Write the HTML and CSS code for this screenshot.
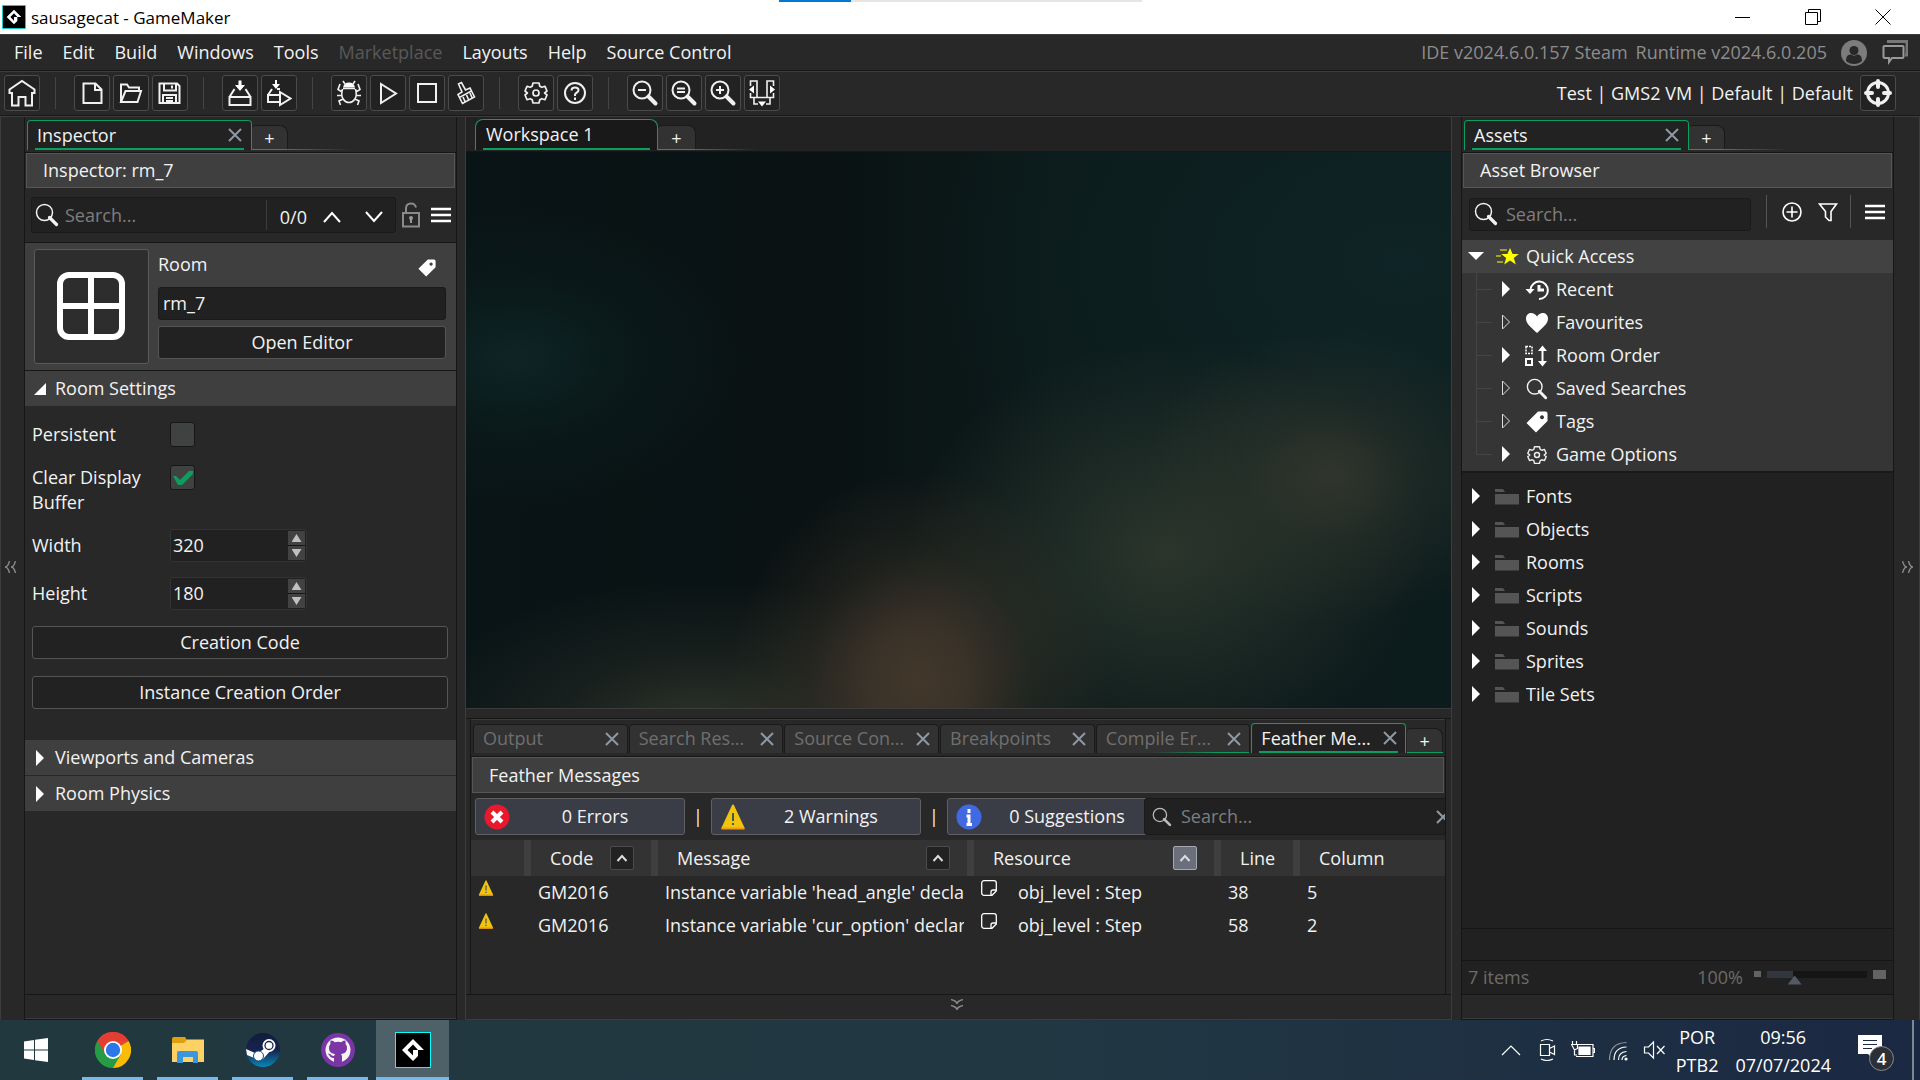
FILE: index.html
```html
<!DOCTYPE html>
<html lang="en">
<head>
    <meta charset="UTF-8">
    <meta name="viewport" content="width=device-width, initial-scale=1.0">
    <title>sausagecat - GameMaker</title>
    <link rel="stylesheet" href="styles.css">
</head>
<body>
    <!-- Shared icons -->
    <svg class="sprite" aria-hidden="true">
        <symbol id="logo" viewBox="0 0 36 36">
            <rect x="0.5" y="0.5" width="35" height="35" fill="#000" stroke="#0ff"/>
            <path fill="#fff" fill-rule="evenodd" d="M18 7 29 18h-6v6l-5 5L7 18zM18 12.500 12.500 18l5.500 5.500v-5.500h5z"/>
        </symbol>
        <symbol id="close" viewBox="0 0 14 14"><path d="M1 1 13 13M13 1 1 13" fill="none" stroke="#8f98a5" stroke-width="2"/></symbol>
        <symbol id="search" viewBox="0 0 24 24"><circle cx="9.500" cy="9.500" r="8" fill="none" stroke="currentColor" stroke-width="1.500"/><path d="m14.500 14.500 7 7" stroke="currentColor" stroke-width="3.200" stroke-linecap="round"/></symbol>
        <symbol id="menu" viewBox="0 0 20 16"><path d="M0 2h20M0 8h20M0 14h20" stroke="#fff" stroke-width="2.600"/></symbol>
        <symbol id="right" viewBox="0 0 16 16"><path d="m4 0 8 8-8 8z" fill="#fff"/></symbol>
        <symbol id="right-empty" viewBox="0 0 16 16"><path d="m4.500 1 7 7-7 7z" fill="none" stroke="#ddd"/></symbol>
        <symbol id="down" viewBox="0 0 16 16"><path d="M0 4h16l-8 8z" fill="#fff"/></symbol>
        <symbol id="folder" viewBox="0 0 26 18"><path d="M1 1h8l2 3H1zM1 6h24v10.500H1z" fill="#555"/></symbol>
        <symbol id="tag" viewBox="0 0 22 22"><path fill="#fff" fill-rule="evenodd" d="M12 .5h7.500a2 2 0 0 1 2 2V10L10 21.500.5 12zM16 4.200a2 2 0 1 0 .01 0z"/></symbol>
        <symbol id="gear" viewBox="0 0 24 24"><path fill="none" stroke="#eee" stroke-width="1.700" stroke-linejoin="round" d="M9 2h6l.8 3.200 2 1.100L21 5.300l2 4.700-2.400 2 2.400 2-2 4.700-3.200-1-2 1.100L15 22H9l-.8-3.200-2-1.100-3.200 1L1 14l2.400-2L1 10l2-4.700 3.200 1 2-1.100z"/><circle cx="12" cy="12" r="3" fill="none" stroke="#eee" stroke-width="1.700"/></symbol>
        <symbol id="warning" viewBox="0 0 24 26"><path d="M12 1.500 22.500 24h-21z" fill="#f1c40f" stroke="#f1c40f" stroke-width="2" stroke-linejoin="round"/><path d="M.5 24.500h23" stroke="#f39c12" stroke-width="2"/><path d="M12 9v8M12 19v2" stroke="#34495e" stroke-width="1.800"/></symbol>
        <symbol id="event" viewBox="0 0 16 16"><path d="M3 .7h10A2.300 2.300 0 0 1 15.300 3v8L11 15.300H3A2.300 2.300 0 0 1 .7 13V3A2.300 2.300 0 0 1 3 .7zM15 10h-3a2 2 0 0 0-2 2v3" fill="none" stroke="#fff" stroke-width="1.300"/></symbol>
        <symbol id="sort" viewBox="0 0 12 8"><path d="m1.500 7 4.500-5 4.500 5" fill="none" stroke="#ddd" stroke-width="2"/></symbol>
    </svg>

    <header class="titlebar">
        <svg class="app-icon"><use href="#logo"/></svg>
        <span>sausagecat - GameMaker</span>
        <div class="progress"></div>
        <div class="window-buttons">
            <button aria-label="Minimise"><svg viewBox="0 0 16 16"><path d="M0 8.500h15"/></svg></button>
            <button aria-label="Restore"><svg viewBox="0 0 16 16"><path d="M.5 3.500h12v12H.5zM3.500 3.500v-3h12v12h-3"/></svg></button>
            <button aria-label="Close window"><svg viewBox="0 0 16 16"><path d="m.5.5 15 15M15.500.5l-15 15"/></svg></button>
        </div>
    </header>

    <nav class="menubar">
        <button>File</button>
        <button>Edit</button>
        <button>Build</button>
        <button>Windows</button>
        <button>Tools</button>
        <button disabled>Marketplace</button>
        <button>Layouts</button>
        <button>Help</button>
        <button>Source Control</button>
        <span class="version">IDE v2024.6.0.157 Steam</span>
        <span class="version">Runtime v2024.6.0.205</span>
        <svg class="account" viewBox="0 0 26 26"><circle cx="13" cy="13" r="13" fill="#7c7c7c"/><circle cx="13" cy="10.500" r="4.500" fill="#282828"/><path d="M5 21c0-7 4-6.500 5-6.500 2 1.500 4 1.500 6 0 1 0 5-.5 5 6.500-4 4-12 4-16 0z" fill="#282828"/></svg>
        <svg class="chat" viewBox="0 0 26 26"><path d="M5 1.500h20V15h-2" fill="none" stroke="#777" stroke-width="3"/><path d="M2.500 6h18a1 1 0 0 1 1 1v10a1 1 0 0 1-1 1H10l-3 4v-4H2.500a1 1 0 0 1-1-1V7a1 1 0 0 1 1-1z" fill="none" stroke="#999" stroke-width="2"/></svg>
    </nav>

    <div class="toolbar">
        <button aria-label="Home"><svg viewBox="1 1 34 34"><path d="M5.500 14.500 18 6l12.500 8.500V18H28v12.500h-6.500V22h-7v8.500H8V18H5.500z"/></svg></button>
        <i class="sep"></i>
        <button aria-label="New"><svg viewBox="1 1 34 34"><path d="M9.500 8.500h12l6 6v13.500h-18zM21 8.500V15h6.500"/></svg></button>
        <button aria-label="Open"><svg viewBox="1 1 34 34"><path d="M8 27V9.500h6l2 3h10V16M8 27l4.500-11H28l-3.500 11z"/></svg></button>
        <button aria-label="Save"><svg viewBox="1 1 34 34"><path d="M7.500 8.500H25l2.500 2.500v17h-20zM12 8.500v7h12v-7M20 10.500v3M11 28v-8h13v8M14 23h7M14 26h7"/></svg></button>
        <i class="sep"></i>
        <button aria-label="Create Executable"><svg viewBox="1 1 34 34"><path d="M7.500 22h21v8h-21zM7.500 22l5-8M28.500 22l-5-8"/><path class="solid" d="M16.500 5.500h3V10H23l-5 6-5-6h3.500z"/></svg></button>
        <button aria-label="Create and Run"><svg viewBox="1 1 34 34"><path d="M18 27H7v-7h12M7 20l4-6M16 14h3M19 17l10.500 6.500L19 30z"/><path class="solid" d="M14 5h2v4h3l-4 5-4-5h3z"/></svg></button>
        <i class="sep"></i>
        <button aria-label="Debug"><svg class="fine" viewBox="1 1 34 34"><path d="M14 9 12 6M22 9l2-3M12 13.500h12M11.500 14q-2 7 1 10.500 2 3 5.500 3t5.500-3q3-3.500 1-10.500M11 17 7 14.500 9 9M25 17l4-2.500L27 9M10.500 20.500H6M25.500 20.500H30M12 24l-4 2 1.500 4M24 24l4 2-1.500 4"/><path class="solid" d="M12 12.500q1-5 6-5t6 5z"/></svg></button>
        <button aria-label="Run"><svg viewBox="1 1 34 34"><path d="m11 9 15 9.500L11 28z"/></svg></button>
        <button aria-label="Stop"><svg viewBox="1 1 34 34"><path d="M9 9h18v18H9z"/></svg></button>
        <button aria-label="Clean"><svg class="fine" viewBox="1 1 34 34"><path d="m10.500 9 3-1.500 4 7.500 4.500-2 1.500 3-12 6.500-1.500-3 4-2.500zM11.500 22.500l3 6 12-6.500-3-6M15 22l2 4.500M18.500 20l2 4.500M22 18l2 4.500"/></svg></button>
        <i class="sep"></i>
        <button aria-label="Game Options"><svg viewBox="-5 -5 34 34"><use href="#gear" width="24" height="24"/></svg></button>
        <button aria-label="Help"><svg viewBox="1 1 34 34"><circle cx="18" cy="18" r="10"/><path d="M14.500 15.500q0-3 3.500-3t3.500 2.500q0 1.500-1.800 2.700T18 20v1M18 22.500V25"/></svg></button>
        <i class="sep"></i>
        <button aria-label="Zoom Out"><svg viewBox="1 1 34 34"><circle cx="15" cy="15" r="8.500"/><path d="M11 15h8"/><path class="thick" d="m21.500 21.500 7 7"/></svg></button>
        <button aria-label="Zoom Reset"><svg viewBox="1 1 34 34"><circle cx="15" cy="15" r="8.500"/><path d="M11 13.500h8M11 17h8"/><path class="thick" d="m21.500 21.500 7 7"/></svg></button>
        <button aria-label="Zoom In"><svg viewBox="1 1 34 34"><circle cx="15" cy="15" r="8.500"/><path d="M11 15h8M15 11v8"/><path class="thick" d="m21.500 21.500 7 7"/></svg></button>
        <button aria-label="Fit to Window"><svg class="fine" viewBox="1 1 34 34"><path d="M6.500 11V6H13v16.500M29.500 11V6H23v16.500M6.500 18v4.500h23V18M10 22.500V29h4M26 22.500V29h-4"/><path class="solid" d="M10 10.500v8L5 14.500zM26 10.500v8l5-4zM14 26.500h8l-4 5z"/></svg></button>
        <span class="target">Test | GMS2 VM | Default | Default</span>
        <button aria-label="Target Manager"><svg viewBox="1 1 34 34"><circle cx="18" cy="18" r="10.500" stroke-width="3"/><path class="thick" d="M18 6v6M18 24v6M6 18h6M24 18h6"/></svg></button>
    </div>

    <main class="workspace">
        <button class="strip left" aria-label="Collapse left dock"><svg viewBox="0 0 12 12"><path d="M5.500 0Q4 6 1 6q3 0 4.500 6M11.500 0Q10 6 7 6q3 0 4.500 6"/></svg></button>

        <section class="dock">
            <div class="tabs">
                <div class="tab active">Inspector<button aria-label="Close"><svg><use href="#close"/></svg></button></div>
                <button class="tab-add">+</button>
            </div>
            <h2 class="panel-title">Inspector: rm_7</h2>
            <div class="inspector-search">
                <div class="search-box">
                    <svg class="search-icon"><use href="#search"/></svg>
                    <input type="text" placeholder="Search..." aria-label="Search inspector">
                    <span class="count">0/0</span>
                    <button aria-label="Previous"><svg viewBox="0 0 20 14"><path d="m2 12 8-9 8 9"/></svg></button>
                    <button aria-label="Next"><svg viewBox="0 0 20 14"><path d="m2 2 8 9 8-9"/></svg></button>
                </div>
                <svg class="lock" viewBox="0 0 18 26"><path d="M1 11h16v13.500H1zM4 11V6.500Q4 1.500 9 1.500q4 0 5 4" fill="none" stroke="#8a8a8a" stroke-width="2"/><circle cx="9" cy="16" r="2" fill="#999"/><path d="M9 16v5" stroke="#999" stroke-width="2"/></svg>
                <button class="icon-button" aria-label="Inspector menu"><svg class="menu-icon"><use href="#menu"/></svg></button>
            </div>

            <div class="resource">
                <div class="thumb"><svg viewBox="0 0 68 68"><rect x="3" y="3" width="62" height="62" rx="9"/><path d="M34 3v62M3 34h62"/></svg></div>
                <div class="resource-info">
                    <div class="resource-type">
                        <label for="roomName">Room</label>
                        <svg class="tag-icon"><use href="#tag"/></svg>
                    </div>
                    <input type="text" id="roomName" value="rm_7">
                    <button class="push">Open Editor</button>
                </div>
            </div>

            <h3 class="section open"><svg viewBox="0 0 12 12"><path d="M12 0v12H0z" fill="#fff"/></svg>Room Settings</h3>
            <div class="settings">
                <div class="field">
                    <label for="persistent">Persistent</label>
                    <input type="checkbox" id="persistent">
                </div>
                <div class="field">
                    <label for="clearBuffer">Clear Display Buffer</label>
                    <input type="checkbox" id="clearBuffer" checked>
                </div>
                <div class="field">
                    <label for="width">Width</label>
                    <div class="number">
                        <input type="number" id="width" value="320">
                        <div class="spin"><button aria-label="Increase width"></button><button aria-label="Decrease width"></button></div>
                    </div>
                </div>
                <div class="field">
                    <label for="height">Height</label>
                    <div class="number">
                        <input type="number" id="height" value="180">
                        <div class="spin"><button aria-label="Increase height"></button><button aria-label="Decrease height"></button></div>
                    </div>
                </div>
                <div class="actions">
                    <button class="push">Creation Code</button>
                    <button class="push">Instance Creation Order</button>
                </div>
            </div>
            <h3 class="section"><svg><use href="#right"/></svg>Viewports and Cameras</h3>
            <h3 class="section"><svg><use href="#right"/></svg>Room Physics</h3>
            <div class="dock-foot"></div>
        </section>

        <div class="gutter left"></div>

        <section class="center">
            <div class="tabs main-tabs">
                <div class="tab active round">Workspace 1</div>
                <button class="tab-add">+</button>
            </div>
            <div class="canvas"></div>
            <div class="split"></div>

            <div class="output">
                <div class="tabs">
                    <div class="tab">Output<button aria-label="Close"><svg><use href="#close"/></svg></button></div>
                    <div class="tab">Search Res...<button aria-label="Close"><svg><use href="#close"/></svg></button></div>
                    <div class="tab">Source Con...<button aria-label="Close"><svg><use href="#close"/></svg></button></div>
                    <div class="tab">Breakpoints<button aria-label="Close"><svg><use href="#close"/></svg></button></div>
                    <div class="tab before-active">Compile Er...<button aria-label="Close"><svg><use href="#close"/></svg></button></div>
                    <div class="tab active">Feather Me...<button aria-label="Close"><svg><use href="#close"/></svg></button></div>
                    <button class="tab-add">+</button>
                </div>
                <h2 class="panel-title">Feather Messages</h2>
                <div class="filters">
                    <button class="filter">
                        <svg viewBox="0 0 26 26"><circle cx="13" cy="13" r="12.500" fill="#e8192c"/><path d="m8 8 10 10M18 8 8 18" stroke="#fff" stroke-width="4"/></svg>
                        <span>0 Errors</span>
                    </button>
                    <span class="bar">|</span>
                    <button class="filter">
                        <svg><use href="#warning"/></svg>
                        <span>2 Warnings</span>
                    </button>
                    <span class="bar">|</span>
                    <button class="filter">
                        <svg viewBox="0 0 26 26"><circle cx="13" cy="13" r="12.500" fill="#4169e1"/><path d="M13 5v4M10.500 12H13v8M10.500 20.500h5.500" fill="none" stroke="#fff" stroke-width="3"/></svg>
                        <span>0 Suggestions</span>
                    </button>
                    <div class="filter-search">
                        <svg class="search-icon"><use href="#search"/></svg>
                        <input type="text" placeholder="Search..." aria-label="Search messages">
                        <button aria-label="Clear"><svg><use href="#close"/></svg></button>
                    </div>
                </div>
                <table class="messages">
                    <colgroup><col class="c-icon"><col class="c-code"><col class="c-message"><col class="c-resource"><col class="c-line"><col></colgroup>
                    <thead>
                        <tr>
                            <th></th>
                            <th><div>Code<button aria-label="Sort by code"><svg><use href="#sort"/></svg></button></div></th>
                            <th><div>Message<button aria-label="Sort by message"><svg><use href="#sort"/></svg></button></div></th>
                            <th><div>Resource<button class="on" aria-label="Sort by resource"><svg><use href="#sort"/></svg></button></div></th>
                            <th><div>Line</div></th>
                            <th><div>Column</div></th>
                        </tr>
                    </thead>
                    <tbody>
                        <tr>
                            <td><svg class="row-icon"><use href="#warning"/></svg></td>
                            <td>GM2016</td>
                            <td><div class="clip">Instance variable 'head_angle' declar</div></td>
                            <td><svg class="row-icon"><use href="#event"/></svg>obj_level : Step</td>
                            <td>38</td>
                            <td>5</td>
                        </tr>
                        <tr>
                            <td><svg class="row-icon"><use href="#warning"/></svg></td>
                            <td>GM2016</td>
                            <td><div class="clip">Instance variable 'cur_option' declar</div></td>
                            <td><svg class="row-icon"><use href="#event"/></svg>obj_level : Step</td>
                            <td>58</td>
                            <td>2</td>
                        </tr>
                    </tbody>
                </table>
            </div>
            <button class="strip bottom" aria-label="Collapse output"><svg viewBox="0 0 12 12"><path d="M0 .5Q6 2 6 5 6 2 12 .5M0 6.500Q6 8 6 11q0-3 6-4.500"/></svg></button>
        </section>

        <div class="gutter right"></div>

        <section class="dock">
            <div class="tabs">
                <div class="tab active">Assets<button aria-label="Close"><svg><use href="#close"/></svg></button></div>
                <button class="tab-add">+</button>
            </div>
            <h2 class="panel-title">Asset Browser</h2>
            <div class="asset-search">
                <div class="search-box">
                    <svg class="search-icon"><use href="#search"/></svg>
                    <input type="text" placeholder="Search..." aria-label="Search assets">
                </div>
                <i class="sep"></i>
                <button class="icon-button" aria-label="Add asset"><svg viewBox="0 0 22 22"><circle cx="11" cy="11" r="9"/><path d="M11 5.500v11M5.500 11h11"/></svg></button>
                <button class="icon-button" aria-label="Filter"><svg viewBox="0 0 22 22"><path d="M2.500 3h17l-5.500 7.500v9h-2L8.500 16v-5.500z"/></svg></button>
                <i class="sep"></i>
                <button class="icon-button" aria-label="Asset menu"><svg class="menu-icon"><use href="#menu"/></svg></button>
            </div>

            <ul class="tree quick">
                <li class="root"><svg class="arrow"><use href="#down"/></svg><svg class="icon" viewBox="0 0 26 20"><path d="m16 1 2.600 6h6.200l-5 4 2 6.500-5.800-4-5.800 4 2-6.500-5-4h6.200z" fill="#ff0"/><path d="M6 3h7M2 9h5M3 15h6" stroke="#ff0"/></svg>Quick Access</li>
                <li><svg class="arrow"><use href="#right"/></svg><svg class="icon" viewBox="0 0 26 22"><path d="M6.500 10.500a8.700 8.700 0 1 1 8.500 9.500" fill="none" stroke="#fff" stroke-width="2"/><path d="M1.500 10h9L6 15z" fill="#fff"/><path d="M15 6v5h5" fill="none" stroke="#fff" stroke-width="3"/></svg>Recent</li>
                <li><svg class="arrow"><use href="#right-empty"/></svg><svg class="icon" viewBox="0 0 26 22"><path d="M13 21C7 15 2 12 2 6.500 2 0 10-1 13 4.500 16-1 24 0 24 6.500 24 12 19 15 13 21z" fill="#fff"/></svg>Favourites</li>
                <li><svg class="arrow"><use href="#right"/></svg><svg class="icon" viewBox="0 0 26 22"><path d="M2 1.500h6v7H2z" fill="none" stroke="#fff" stroke-width="1.500" stroke-dasharray="2 1"/><path d="M2 14h6v6H2zM18.500 3v16" fill="none" stroke="#fff" stroke-width="2"/><path d="m14 6 4.500-5.500L23 6zM14 16h9l-4.500 5.500z" fill="#fff"/></svg>Room Order</li>
                <li><svg class="arrow"><use href="#right-empty"/></svg><svg class="icon"><use href="#search"/></svg>Saved Searches</li>
                <li><svg class="arrow"><use href="#right-empty"/></svg><svg class="icon"><use href="#tag"/></svg>Tags</li>
                <li><svg class="arrow"><use href="#right"/></svg><svg class="icon small"><use href="#gear"/></svg>Game Options</li>
            </ul>
            <ul class="tree assets">
                <li><svg class="arrow"><use href="#right"/></svg><svg class="icon"><use href="#folder"/></svg>Fonts</li>
                <li><svg class="arrow"><use href="#right"/></svg><svg class="icon"><use href="#folder"/></svg>Objects</li>
                <li><svg class="arrow"><use href="#right"/></svg><svg class="icon"><use href="#folder"/></svg>Rooms</li>
                <li><svg class="arrow"><use href="#right"/></svg><svg class="icon"><use href="#folder"/></svg>Scripts</li>
                <li><svg class="arrow"><use href="#right"/></svg><svg class="icon"><use href="#folder"/></svg>Sounds</li>
                <li><svg class="arrow"><use href="#right"/></svg><svg class="icon"><use href="#folder"/></svg>Sprites</li>
                <li><svg class="arrow"><use href="#right"/></svg><svg class="icon"><use href="#folder"/></svg>Tile Sets</li>
            </ul>
            <div class="breadcrumb"></div>
            <div class="status">
                <span>7 items</span>
                <label for="zoom">100%</label>
                <i class="zoom-small"></i>
                <input type="range" id="zoom" min="0" max="100" value="24">
                <i class="zoom-large"></i>
            </div>
            <div class="dock-foot"></div>
        </section>

        <button class="strip right" aria-label="Collapse right dock"><svg viewBox="0 0 12 12"><path d="M.5 0Q2 6 5 6 2 6 .5 12M6.500 0Q8 6 11 6 8 6 6.500 12"/></svg></button>
    </main>

    <footer class="taskbar">
        <button class="start" aria-label="Start"><svg viewBox="0 0 24 24"><path fill="#fff" d="M0 3.400 10 2v9.500H0zM11 1.800 24 0v11.500H11zM0 12.500h10V22L0 20.600zM11 12.500h13V24l-13-1.800z"/></svg></button>
        <button class="task" aria-label="Chrome"><svg viewBox="0 0 36 36"><path d="M18 18 2.400 9A18 18 0 0 1 33.600 9z" fill="#ea4335"/><path d="M18 18 33.600 9A18 18 0 0 1 18 36z" fill="#fbbc05"/><path d="M18 18 25.800 22.500 18 36A18 18 0 0 1 2.400 9z" fill="#259b45"/><path d="M2.400 9 10.200 22.500 18 9h15.600A18 18 0 0 0 2.400 9z" fill="#e33e31"/><path d="M2.400 9 10.200 22.500 18 27l-3 8.700A18 18 0 0 1 2.400 9z" fill="#259b45"/><circle cx="18" cy="18" r="9" fill="#fff"/><circle cx="18" cy="18" r="7.200" fill="#2d78e9"/></svg></button>
        <button class="task" aria-label="File Explorer"><svg viewBox="0 0 36 36"><path d="M2 7q0-2 2-2h11l2 3-2 3H2z" fill="#e0a00d"/><path d="M2 11h12l3-3.500h17V30H2z" fill="#fdd163"/><path d="M7 31V21q0-2 2-2h17q2 0 2 2v10h-5v-6H13v6z" fill="#3a96dd"/></svg></button>
        <button class="task" aria-label="Steam"><svg viewBox="0 0 36 36"><defs><linearGradient id="steam" x2="0" y2="1"><stop offset="0" stop-color="#111d3a"/><stop offset=".5" stop-color="#17234f"/><stop offset="1" stop-color="#0887b8"/></linearGradient></defs><circle cx="18" cy="18" r="17" fill="url(#steam)"/><path d="m1 17 11 5 8-6 7 1-9 10-4 1L2 23z" fill="#fff"/><circle cx="24" cy="13.500" r="6.500" fill="#fff"/><circle cx="24" cy="13.500" r="4" fill="#fff" stroke="#17234f" stroke-width="1.300"/><circle cx="13.500" cy="24" r="5" fill="#fff" stroke="#124d80"/></svg></button>
        <button class="task" aria-label="GitHub Desktop"><svg viewBox="0 0 36 36"><circle cx="18" cy="18" r="17" fill="#7b35a5"/><circle cx="18" cy="18" r="12.500" fill="#f4f4f4"/><path fill="#7b35a5" d="M14 31v-5c-5 0-4-4-6.500-4 3-1.500 4 2.500 6.500 2l1-2c-4.500-.5-6-3-6-6 0-2 .5-3 1.500-4-.5-1.500 0-3 .3-3.500 2 0 3 1 4 1.700a13 13 0 0 1 6.400 0c1-.7 2-1.700 4-1.700.3.500.8 2 .3 3.500 1 1 1.500 2 1.500 4 0 3-1.500 5.500-6 6l1 2v7z"/></svg></button>
        <button class="task current" aria-label="GameMaker"><svg><use href="#logo"/></svg></button>

        <div class="tray">
            <svg viewBox="0 0 24 24"><path d="m3 17 9-9 9 9"/></svg>
            <svg viewBox="0 0 24 24"><path d="M5.500 6.500h9v11h-9zM14.500 10.500l5-2.500v8.500l-5-2.500M6 3q6-3 12 0M6 21q6 3 12 0"/></svg>
            <svg viewBox="0 0 24 24"><path d="M5 18.500h17v-12H7M22.500 10.500h1v4h-1"/><path d="M8 9h11v7.500H8z" fill="#fff"/><path d="M1.500 3v3M5.500 3v3M.5 6.500h6v4L3.500 12zM3.500 11v6H6"/></svg>
            <svg viewBox="0 0 24 24"><path d="M2.500 22Q2.500 5 19.500 4.500" opacity=".5"/><path d="M7 22Q7 9.500 19.500 9M11.500 22q0-8 8-8.500M15 22q0-4 4.500-4.500"/><circle cx="19" cy="21" r="1" fill="#fff"/></svg>
            <svg viewBox="0 0 24 24"><path d="M1.500 9h4l5-5v16l-5-5h-4zM14 8l7.500 8M21.500 8 14 16"/></svg>
        </div>
        <div class="lang"><span>POR</span><span>PTB2</span></div>
        <div class="clock"><span>09:56</span><span>07/07/2024</span></div>
        <button class="notifications" aria-label="Notifications">
            <svg viewBox="0 0 24 24"><path d="M0 0h24v19h-9v5l-5-5H0z" fill="#fff"/><path d="M5 5.500h14M5 9.500h14M5 13.500h9" stroke="#1d2c44" stroke-width="1.200"/></svg>
            <span class="badge">4</span>
        </button>
        <i class="show-desktop"></i>
    </footer>
</body>
</html>
```

FILE: styles.css
```css
* {
    box-sizing: border-box;
}

body {
    margin: 0;
    min-height: 100vh;
    display: flex;
    flex-direction: column;
    overflow: hidden;
    background-color: #282828;
    color: #f2f2f2;
    font-family: "Open Sans", "Noto Sans", sans-serif;
    font-size: 18px;
    line-height: 25px;
}

button, input {
    font: inherit;
    color: inherit;
    margin: 0;
    padding: 0;
    border: none;
    background: none;
}

input {
    outline: none;
    min-width: 0;
}

input::placeholder {
    color: #7e7e7e;
    opacity: 1;
}

svg {
    display: block;
    flex: none;
}

h2, h3 {
    margin: 0;
    font-size: 18px;
    font-weight: normal;
}

.sprite {
    position: absolute;
    width: 0;
    height: 0;
}

/* Title bar */
.titlebar {
    position: relative;
    display: flex;
    align-items: center;
    height: 34px;
    padding: 0 2px;
    gap: 5px;
    background-color: #fff;
    color: #000;
    font-size: 17px;
}

.app-icon {
    width: 24px;
    height: 24px;
}

.progress {
    position: absolute;
    top: 0;
    left: 779px;
    width: 363px;
    height: 2px;
    background: linear-gradient(to right, #0078d7 72px, #e5e5e5 72px);
}

.window-buttons {
    display: flex;
    margin-left: auto;
}

.window-buttons button {
    width: 70px;
    height: 34px;
    display: flex;
    align-items: center;
    justify-content: center;
}

.window-buttons svg {
    width: 16px;
    height: 16px;
    fill: none;
    stroke: #000;
}

/* Menu and toolbar */
.menubar {
    display: flex;
    align-items: center;
    height: 37px;
    padding-left: 4px;
    border-top: 1px solid #3c3c3c;
    border-bottom: 1px solid #191919;
}

.menubar button {
    padding: 0 10px;
}

.menubar button:disabled {
    color: #595959;
}

.version {
    margin-left: 8px;
    color: #8d8d8d;
}

.menubar button + .version {
    margin-left: auto;
}

.account {
    width: 26px;
    height: 26px;
    margin-left: 14px;
}

.chat {
    width: 26px;
    height: 26px;
    margin: 0 12px 0 15px;
}

.toolbar {
    display: flex;
    align-items: center;
    gap: 3px;
    height: 45px;
    padding: 0 24px 1px 4px;
    border-top: 1px solid #3c3c3c;
    border-bottom: 1px solid #191919;
}

.toolbar button {
    width: 36px;
    height: 36px;
    border: 1px solid #4b4b4b;
    border-radius: 3px;
    background-color: #222;
}

.toolbar svg {
    width: 34px;
    height: 34px;
    fill: none;
    stroke: #f0f0f0;
    stroke-width: 2;
}

.toolbar .fine {
    stroke-width: 1.6;
}

.toolbar .solid {
    fill: #fff;
    stroke: none;
}

.toolbar .thick {
    stroke-width: 4;
    stroke-linecap: round;
}

.toolbar .sep {
    width: 1px;
    height: 32px;
    margin: 0 15px 0 12px;
    background-color: #444;
}

.target {
    margin-left: auto;
    margin-right: 4px;
}

/* Docks */
.workspace {
    flex: 1;
    display: flex;
    border-top: 1px solid #3c3c3c;
}

.strip {
    display: flex;
    align-items: center;
    justify-content: center;
    padding-bottom: 4px;
}

.strip svg {
    width: 12px;
    height: 12px;
    fill: none;
    stroke: #8a8a8a;
    stroke-width: 1.4;
}

.strip.left {
    width: 24px;
    padding-right: 5px;
    border-left: 1px solid #3c3c3c;
}

.strip.right {
    width: 26px;
    padding-left: 2px;
    border-right: 1px solid #3c3c3c;
}

.strip.bottom {
    height: 26px;
    padding-right: 4px;
    border-top: 1px solid #161616;
    border-bottom: 1px solid #3c3c3c;
}

.dock {
    width: 433px;
    display: flex;
    flex-direction: column;
    border: solid #161616;
    border-width: 0 1px 1px;
}

.dock-foot {
    height: 25px;
    margin-top: auto;
    border-top: 1px solid #161616;
    border-bottom: 1px solid #3c3c3c;
}

.gutter.left {
    width: 9px;
    border-right: 1px solid #3c3c3c;
}

.gutter.right {
    width: 10px;
    border-left: 1px solid #3c3c3c;
}

.tabs {
    display: flex;
    align-items: flex-end;
    height: 36px;
    padding: 0 2px 2px;
    border-bottom: 1px solid #161616;
}

.tab {
    display: flex;
    align-items: center;
    justify-content: space-between;
    position: relative;
    height: 29px;
    padding: 0 8px 1px 9px;
    border: solid #1a1a1a;
    border-width: 1px 1px 0;
    border-radius: 4px 4px 0 0;
    background-color: #323232;
    color: #6f6f6f;
}

.tab svg {
    width: 14px;
    height: 14px;
}

.tab.active {
    height: 30px;
    border-color: #0d9d5c;
    background-color: #222;
    color: #f2f2f2;
}

.tab.active::after {
    content: "";
    position: absolute;
    left: 7px;
    right: 7px;
    bottom: 0;
    height: 2px;
    background-color: #0d9d5c;
}

/* Fading line that continues the active tab */
.tab.active + .tab-add::after,
.tab.before-active::after {
    content: "";
    position: absolute;
    left: 0;
    bottom: 0;
    width: 100px;
    height: 1px;
    background: linear-gradient(to right, #0d9d5c 30%, transparent);
}

.tab.before-active::after {
    left: auto;
    right: 0;
    background: linear-gradient(to left, #0d9d5c 30%, transparent);
}

.dock .tab {
    width: 225px;
    padding-right: 9px;
}

.tab-add {
    position: relative;
    width: 36px;
    height: 25px;
    border: solid #1a1a1a;
    border-width: 1px 1px 0 0;
    border-radius: 4px 8px 0 0;
    background-color: #323232;
    line-height: 22px;
}

.panel-title {
    height: 36px;
    margin: 0 1px;
    padding: 0 16px;
    border: 1px solid #565656;
    background-color: #3f3f3f;
    line-height: 34px;
}

.dock .panel-title {
    height: 35px;
    line-height: 32px;
}

.search-box {
    display: flex;
    align-items: center;
    min-width: 0;
    border: 1px solid #1a1a1a;
    border-radius: 3px;
    background-color: #212121;
}

.search-icon {
    width: 24px;
    height: 24px;
}

.icon-button svg {
    width: 22px;
    height: 22px;
    fill: none;
    stroke: #fff;
    stroke-width: 1.6;
}

.icon-button .menu-icon {
    width: 20px;
    height: 16px;
}

/* Inspector */
.inspector-search {
    display: flex;
    align-items: center;
    height: 54px;
    padding: 0 5px 0 6px;
}

.inspector-search .search-box {
    flex: 1;
    height: 36px;
    padding-left: 3px;
}

.inspector-search input {
    flex: 1;
    height: 30px;
    padding-left: 6px;
    border-right: 1px solid #3c3c3c;
}

.count {
    padding: 4px 4px 0 13px;
}

.search-box button {
    width: 42px;
    flex: none;
    padding: 4px 11px 0;
}

.search-box button svg {
    width: 20px;
    height: 14px;
    fill: none;
    stroke: #fff;
    stroke-width: 2;
}

.lock {
    width: 18px;
    height: 26px;
    margin: 0 11px 0 6px;
}

.resource {
    display: flex;
    gap: 9px;
    height: 128px;
    padding: 6px 10px 0 9px;
    border-top: 1px solid #161616;
    background-color: #3f3f3f;
}

.thumb {
    width: 115px;
    height: 115px;
    display: flex;
    align-items: center;
    justify-content: center;
    padding: 0 2px 2px 0;
    border: 1px solid #5a5a5a;
    border-radius: 3px;
    background-color: #2d2d2d;
}

.thumb svg {
    width: 68px;
    height: 68px;
    fill: none;
    stroke: #fff;
    stroke-width: 6;
}

.resource-info {
    flex: 1;
    display: flex;
    flex-direction: column;
}

.resource-type {
    display: flex;
    align-items: center;
    justify-content: space-between;
    height: 38px;
    padding: 0 10px 7px 0;
}

.tag-icon {
    width: 18px;
    height: 18px;
    margin-top: 6px;
}

.resource-info input {
    height: 33px;
    padding: 0 4px 2px;
    border: 1px solid #1a1a1a;
    border-radius: 3px;
    background-color: #212121;
}

.push {
    height: 33px;
    border: 1px solid #555;
    border-radius: 3px;
    background-color: #222;
}

.resource-info .push {
    margin-top: 6px;
}

.section {
    display: flex;
    align-items: center;
    gap: 7px;
    height: 36px;
    padding-left: 7px;
    border-top: 1px solid #282828;
    background-color: #3f3f3f;
}

.section svg {
    width: 16px;
    height: 16px;
}

.section.open {
    padding-left: 9px;
    gap: 9px;
    border-top-color: #161616;
}

.section.open svg {
    width: 12px;
    height: 12px;
}

.settings {
    padding: 16px 8px 30px 7px;
}

.field {
    display: flex;
    align-items: flex-start;
    margin-bottom: 18px;
}

.field label {
    width: 120px;
    margin-right: 18px;
}

.field input[type="checkbox"] {
    appearance: none;
    width: 25px;
    height: 25px;
    border: 1px solid #161616;
    border-radius: 3px;
    background-color: #404241;
}

.field input[type="checkbox"]:checked::after {
    content: "";
    display: block;
    width: 20px;
    height: 14px;
    margin: 5px 2px;
    background-color: #0d9d5c;
    clip-path: polygon(0 35%, 15% 35%, 35% 65%, 80% 0, 100% 0, 100% 22%, 45% 100%, 25% 100%);
}

.number {
    display: flex;
    width: 137px;
    height: 33px;
    margin: -4px 0;
    padding: 1px;
    border: 1px solid #333;
    border-radius: 2px;
    background-color: #212121;
}

.number input {
    flex: 1;
    padding-left: 1px;
    appearance: textfield;
}

.number input::-webkit-inner-spin-button {
    display: none;
}

.field:has(.number) {
    margin-bottom: 23px;
}

.spin {
    display: flex;
    flex-direction: column;
    gap: 1px;
    width: 17px;
    background-color: #161616;
}

.spin button {
    flex: 1;
    background-color: #424242;
}

.spin button::before {
    content: "";
    display: block;
    width: 10px;
    height: 8px;
    margin: 0 auto;
    background-color: #c0c0c0;
    clip-path: polygon(50% 0, 100% 100%, 0 100%);
}

.spin button + button::before {
    clip-path: polygon(0 0, 100% 0, 50% 100%);
}

.actions {
    display: flex;
    flex-direction: column;
    gap: 17px;
    margin-top: -3px;
}

/* Centre column */
.center {
    flex: 1;
    min-width: 0;
    display: flex;
    flex-direction: column;
}

.main-tabs {
    height: 35px;
    padding: 0 9px 1px;
    background-color: #222;
}

.tab.round {
    width: 183px;
    height: 31px;
    padding-left: 10px;
    border-radius: 8px 8px 0 0;
    background-color: #191919;
}

.round + .tab-add {
    width: 38px;
}

.canvas {
    flex: 1;
    background:
        radial-gradient(ellipse 190px 210px at 46% 95%, #42372b 0%, rgba(66, 55, 43, 0.85) 25%, rgba(62, 52, 41, 0.35) 60%, transparent 100%),
        radial-gradient(ellipse 190px 150px at 88% 58%, rgba(56, 58, 47, 0.8), rgba(50, 55, 45, 0.4) 45%, transparent),
        radial-gradient(ellipse 260px 210px at 71% 72%, rgba(46, 56, 46, 0.9), rgba(42, 53, 44, 0.5) 50%, transparent),
        radial-gradient(ellipse 300px 150px at 24% 104%, rgba(50, 54, 44, 0.95), rgba(44, 50, 42, 0.4) 50%, transparent),
        radial-gradient(ellipse 240px 150px at 5% 37%, rgba(15, 38, 38, 0.9), rgba(12, 32, 32, 0.4) 50%, transparent),
        radial-gradient(ellipse 480px 330px at 95% 20%, rgba(15, 38, 40, 0.8), transparent),
        linear-gradient(to right, #091416 0%, #0a1213 35%, #0c1a1a 60%, #0c1b1c 100%);
}

.split {
    height: 11px;
    border-top: 1px solid #3c3c3c;
    border-bottom: 1px solid #161616;
}

.output {
    display: flex;
    flex-direction: column;
    height: 275px;
    margin: 0 5px 0 4px;
    border: solid #161616;
    border-width: 0 1px;
    overflow: hidden;
}

.output .tabs {
    flex: none;
    gap: 1px;
    border-top: 1px solid #3c3c3c;
    padding: 0 2px 3px;
    height: 38px;
}

.output .tab {
    flex: 1;
}

.output .panel-title {
    flex: none;
}

.output .tab.active + .tab-add::after {
    width: 36px;
    background: #0d9d5c;
}

.filters {
    display: flex;
    align-items: center;
    flex: none;
    height: 47px;
    padding-left: 4px;
}

.filter {
    display: flex;
    align-items: center;
    width: 210px;
    height: 37px;
    flex: none;
    padding-left: 8px;
    border: 1px solid #5e5f62;
    border-radius: 3px;
    background-color: #3b3d46;
}

.filter svg {
    width: 26px;
    height: 26px;
}

.filter span {
    flex: 1;
    padding-right: 4px;
    text-align: center;
}

.bar {
    flex: none;
    width: 26px;
    text-align: center;
}

/* The search field covers the end of the last filter */
.filter-search {
    display: flex;
    align-items: center;
    flex: none;
    position: relative;
    width: 307px;
    height: 37px;
    margin-left: -13px;
    padding-left: 6px;
    border: 1px solid #1a1a1a;
    border-radius: 3px;
    background-color: #212121;
}

.filter-search .search-icon {
    width: 20px;
    height: 20px;
    margin-left: 1px;
    color: #bbb;
}

.filter-search input {
    flex: 1;
    padding-left: 9px;
}

.filter-search button svg {
    width: 14px;
    height: 14px;
}

.messages {
    width: 100%;
    table-layout: fixed;
    border-collapse: collapse;
}

.c-icon { width: 60px; }
.c-code { width: 127px; }
.c-message { width: 316px; }
.c-resource { width: 247px; }
.c-line { width: 79px; }

.messages th {
    height: 36px;
    padding: 0 17px 0 19px;
    background: linear-gradient(#3f3f3f, #3f3f3f) right / 7px 100% no-repeat #333;
    font-weight: normal;
    text-align: left;
}

.messages th:last-child {
    background: #333;
}

.messages th div {
    display: flex;
    align-items: center;
    justify-content: space-between;
    padding-right: 7px;
}

.messages th button {
    width: 24px;
    height: 24px;
    display: flex;
    align-items: center;
    justify-content: center;
    border: 1px solid #4b4b4b;
    border-radius: 2px;
    background-color: #222;
}

.messages th button.on {
    border-color: #a4a8b0;
    background-color: #6a6f7b;
}

.messages th svg {
    width: 12px;
    height: 8px;
}

.messages td {
    height: 33px;
    padding: 0 7px;
    line-height: 33px;
    vertical-align: top;
    white-space: nowrap;
}

.clip {
    width: 299px;
    overflow: hidden;
}

.row-icon {
    float: left;
    width: 16px;
    height: 16px;
    margin: 4px 21px 0 0;
}

/* Asset browser */
.asset-search {
    display: flex;
    align-items: center;
    height: 52px;
    padding: 0 8px 0 7px;
}

.asset-search .search-box {
    flex: 1;
    height: 33px;
    margin-right: 15px;
    padding-left: 4px;
}

.asset-search input {
    flex: 1;
    padding-left: 8px;
}

.asset-search .sep {
    width: 1px;
    height: 33px;
    margin-bottom: 5px;
    background-color: #555;
}

.asset-search .icon-button {
    margin-bottom: 4px;
}

.asset-search .sep + .icon-button {
    margin-left: 14px;
}

.icon-button + .icon-button {
    margin-right: 11px;
    margin-left: 14px;
}

.tree {
    margin: 0;
    padding: 0;
    list-style: none;
}

.tree li {
    display: flex;
    align-items: center;
    position: relative;
    height: 33px;
    padding-left: 6px;
}

.arrow {
    width: 16px;
    height: 16px;
    margin: 0 10px 2px 0;
}

.icon {
    width: 26px;
    height: 22px;
    margin-right: 6px;
}

.icon.small {
    height: 20px;
}

.quick {
    background-color: #353535;
    border-bottom: 2px solid #191919;
}

.quick li:not(.root) {
    padding-left: 36px;
}

.quick .root {
    background-color: #424242;
}

.quick li:not(.root)::before {
    content: "";
    position: absolute;
    left: 14px;
    bottom: 16px;
    width: 15px;
    height: 33px;
    border: solid #454545;
    border-width: 0 0 1px 1px;
}

.quick li:nth-child(2)::before {
    height: 17px;
}

.assets {
    flex: 1;
    padding-top: 7px;
    background-color: #212121;
}

.breadcrumb {
    height: 32px;
    border-top: 1px solid #161616;
    background-color: #212121;
}

.status {
    display: flex;
    align-items: center;
    height: 34px;
    padding: 0 7px 0 6px;
    border-top: 1px solid #161616;
    background-color: #212121;
    color: #6b6b6b;
}

.status label {
    margin-left: auto;
}

.zoom-small {
    width: 7px;
    height: 6px;
    margin: 0 6px 7px 11px;
    background-color: #636363;
}

.zoom-large {
    width: 13px;
    height: 9px;
    margin: 0 0 6px 6px;
    background-color: #636363;
}

.status input {
    appearance: none;
    width: 100px;
    height: 14px;
    background: linear-gradient(to right, #32363e 26%, #151515 26%) top / 100% 7px no-repeat;
}

.status input::-webkit-slider-thumb {
    appearance: none;
    width: 14px;
    height: 9px;
    margin-top: 5px;
    background-color: #555963;
    clip-path: polygon(50% 0, 100% 100%, 0 100%);
}

/* Taskbar */
.taskbar {
    display: flex;
    align-items: center;
    height: 60px;
    background: linear-gradient(to right, #22383f, #213843 55%, #1b2842);
    color: #fff;
}

.start {
    width: 75px;
    padding-left: 24px;
}

.start svg {
    width: 24px;
    height: 24px;
}

.task {
    position: relative;
    width: 73px;
    height: 60px;
    margin: 0 1px;
}

.task svg {
    width: 36px;
    height: 36px;
    margin: 0 auto;
}

.task::after {
    content: "";
    position: absolute;
    left: 6px;
    right: 6px;
    bottom: 0;
    height: 3px;
    background-color: #76b9ed;
}

.task.current {
    background-color: #4e6068;
}

.task.current::after {
    left: 0;
    right: 0;
}

.tray {
    display: flex;
    gap: 12px;
    margin-left: auto;
}

.tray svg {
    width: 24px;
    height: 24px;
    fill: none;
    stroke: #fff;
    stroke-width: 1.2;
}

.lang, .clock {
    display: flex;
    flex-direction: column;
    align-items: center;
    padding-top: 2px;
    line-height: 28px;
}

.lang {
    margin: 0 17px 0 9px;
}

.notifications {
    position: relative;
    margin: 0 30px 6px 27px;
}

.notifications svg {
    width: 24px;
    height: 24px;
}

.badge {
    position: absolute;
    left: 11px;
    top: 11px;
    width: 25px;
    height: 25px;
    border: 1px solid #85888c;
    border-radius: 50%;
    background-color: #2c3036;
    font-size: 17px;
    line-height: 23px;
    font-weight: 600;
}

.show-desktop {
    width: 2px;
    height: 60px;
    margin-right: 6px;
    background-color: #7e8797;
}
```
